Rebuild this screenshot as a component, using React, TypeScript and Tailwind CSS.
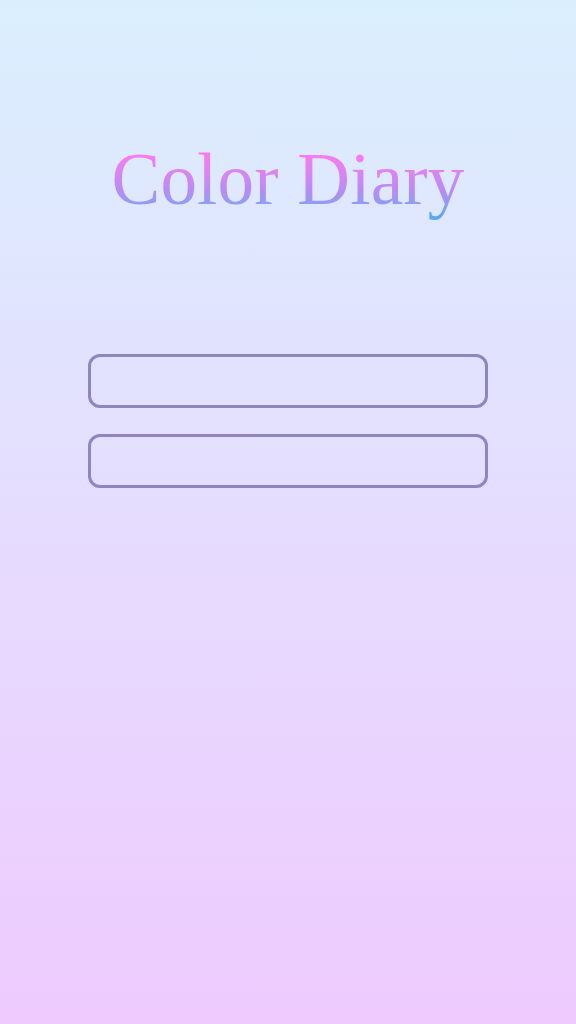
export default function App() {
  return (
    <div className="min-h-[1024px] w-full bg-gradient-to-b from-[#daeffe] to-[#eecafe] flex flex-col items-center">
      <h1
        className="mt-[140px] h-[80px] leading-[80px] text-[73px] tracking-[0.2px] bg-gradient-to-b from-[#ff78f1] from-15% via-[#b48df3] via-65% to-[#58aaf6] to-95% bg-clip-text text-transparent"
        style={{ fontFamily: '"Liberation Serif", "Times New Roman", serif' }}
      >
        Color Diary
      </h1>
      <form className="mt-[134px] flex flex-col gap-[26px]">
        <input
          type="text"
          className="w-[400px] h-[54px] rounded-[12px] border-[3px] border-[#8f85c0] bg-transparent outline-none px-3"
        />
        <input
          type="password"
          className="w-[400px] h-[54px] rounded-[12px] border-[3px] border-[#8f85c0] bg-transparent outline-none px-3"
        />
      </form>
    </div>
  )
}
